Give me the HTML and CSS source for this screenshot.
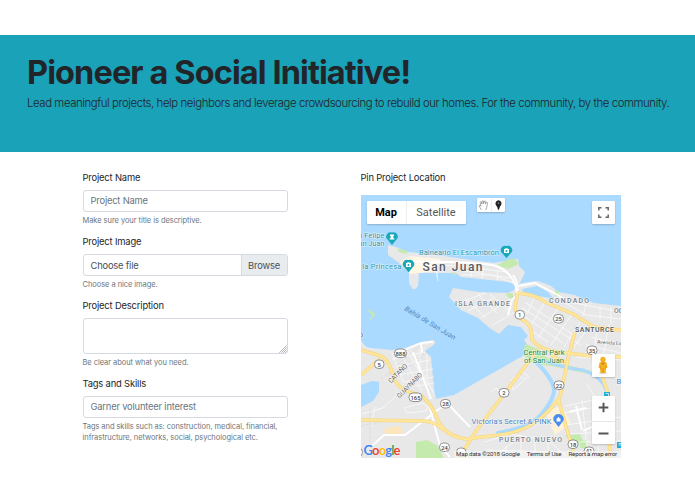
FILE: index.html
```html
<!DOCTYPE html>
<html lang="en">
<head>
    <meta charset="UTF-8">
    <meta name="viewport" content="width=device-width, initial-scale=1.0">
    <title>Pioneer a Social Initiative!</title>
    <link rel="stylesheet" href="styles.css">
</head>
<body>
    <header class="jumbotron">
        <h1>Pioneer a Social Initiative!</h1>
        <p class="lead">Lead meaningful projects, help neighbors and leverage crowdsourcing to rebuild our homes. For the community, by the community.</p>
    </header>

    <main class="container">
        <form class="project-form">
            <div class="form-group">
                <label for="projectName">Project Name</label>
                <input type="text" class="form-control" id="projectName" placeholder="Project Name">
                <small class="form-text">Make sure your title is descriptive.</small>
            </div>

            <div class="form-group">
                <label>Project Image</label>
                <div class="custom-file">
                    <span class="file-name">Choose file</span>
                    <span class="file-btn">Browse</span>
                </div>
                <small class="form-text">Choose a nice image.</small>
            </div>

            <div class="form-group">
                <label for="projectDescription">Project Description</label>
                <div class="textarea-wrap">
                    <textarea class="form-control" id="projectDescription"></textarea>
                    <svg class="grip" viewBox="0 0 9 9">
                        <path d="M0.5 8.5L8.5 0.5M2.8 8.5L8.5 2.8M5 8.5L8.5 5M7 8.5L8.5 7" stroke="#777" stroke-width="0.8" stroke-dasharray="1.1 0.3"/>
                    </svg>
                </div>
                <small class="form-text">Be clear about what you need.</small>
            </div>

            <div class="form-group">
                <label for="tags">Tags and Skills</label>
                <input type="text" class="form-control" id="tags" placeholder="Garner volunteer interest">
                <small class="form-text">Tags and skills such as: construction, medical, financial,<br>infrastructure, networks, social, psychological etc.</small>
            </div>
        </form>

        <section class="location">
            <label>Pin Project Location</label>
            <div class="map">
                <svg class="map-canvas" viewBox="0 0 260 263" width="260" height="263">
                    <rect width="260" height="263" fill="#aadaff"/>

                    <!-- land -->
                    <g fill="#e8e8e8">
                        <path d="M27 50L35 52L47 57L83 61L110 65L133 68L157 64L158 71L164 77L161 84L157 91L147 87L120 84L100 82L95 78L77 78V84L76 78L58 78L57 91Q54 96 51 93L48 88V78L37 67L27 60Z"/>
                        <path d="M0 145Q4 153 10 153L31 155L44 153L57 148L72 145Q77 147 71 151L64 156L70 162L74 204L93 200L160 162L170 155L163 145L167 141L160 132L147 130L138 139L130 134L117 123L100 115L88 102L92 93L117 97L147 98L153 95L157 89L167 87L177 86L190 91L197 97L213 100L233 108L260 111V263H0Z"/>
                    </g>
                    <path d="M0 190L11 186L18 187V197L12 206L0 212Z" fill="#aadaff"/>
                    <path d="M161 94L176 91L187 97L193 104L178 101L162 97Z" fill="#aadaff"/>

                    <!-- blocks, parks -->
                    <path d="M49 61L80 64L76 76L49 79L39 67Z" fill="#fff7e4"/>
                    <path d="M184 216L201 211L210 228L194 240Z" fill="#fff2d9"/>
                    <path d="M24 233L40 231L42 238L29 241L23 237Z" fill="#fbe6bd"/>
                    <g fill="#c5eaae">
                        <path d="M136 70L148 64H154L158 69L147 74Z"/>
                        <path d="M36 53L46 56V59L38 57Z"/>
                        <path d="M91 77L95 78L93 81Z"/>
                        <path d="M6 114Q13 116 14 120L8 126L11 120Z"/>
                        <path d="M144 99L151 98L154 103L148 103Z"/>
                        <path d="M194 96H198V101H194Z"/>
                        <path d="M164 149L175 153L190 166L230 176L228 179L190 171L174 169L162 160Z"/>
                        <path d="M55 247L66 245L77 251L83 263H55Z"/>
                        <path d="M204 240L219 239L223 248L211 248Z"/>
                        <path d="M219 247L226 245V253H219Z"/>
                    </g>

                    <!-- canals -->
                    <g fill="none" stroke="#aadaff" stroke-linecap="round">
                        <path d="M176 168Q193 185 193 196Q192 207 177 223Q166 233 137 238" stroke-width="4"/>
                        <path d="M183 166Q207 174 222 175Q241 182 245 195" stroke-width="3"/>
                    </g>

                    <!-- minor streets -->
                    <g fill="none" stroke="#fff" stroke-width="0.9" opacity="0.75">
                        <path d="M44 69L98 71L145 77M99 75L149 83M101 80L130 80L153 88M110 68V82M123 72L121 84M137 75L136 85M75 76L77 86M68 62L66 76"/>
                        <path d="M104 103L125 123M116 98L136 118M129 99L149 117M98 108L124 98M107 116L134 102M120 123L149 104M132 130L154 117"/>
                        <path d="M164 107L214 141M161 113L220 150M161 120L202 148M172 137L187 147M174 101L166 119M185 105L171 129M197 113L177 143M211 119L190 150M219 127L203 152M227 133L213 152"/>
                        <path d="M198 104L225 120L260 124M208 107L260 117M225 109L222 121M239 112V124M250 113V129M230 142L260 150M225 150L260 158M216 162L260 165M237 130L230 174M248 129L239 179"/>
                        <path d="M31 158L42 187M38 156L61 196M45 154L66 190M50 155L75 203M31 164L64 157M33 172L69 165M37 180L72 174M42 187L73 182M55 191L73 188M59 155V175M66 160V183"/>
                        <path d="M43 213L61 208L67 211L65 216L46 218ZM130 197L135 193L142 200M150 185L160 177L168 181L152 195ZM157 181L164 184"/>
                        <path d="M204 211L242 203M201 218L242 211M205 230L260 222M209 239L260 236M221 205L227 263M234 202L238 263M218 247L260 246M226 190L234 202"/>
                        <path d="M124 247L150 239L188 246L207 263M132 262L153 247M145 251V263M160 244V263M174 245V263M187 246V260M124 255L200 257M1 219L22 213L39 197M14 212L10 231"/>
                    </g>
                    <path d="M20 184L76 136M0 231L19 227M9 214V247M27 180L57 167L72 145" fill="none" stroke="#d3d3d3" stroke-width="0.6" stroke-dasharray="3 1.5"/>

                    <!-- avenues -->
                    <g fill="none" stroke="#fff" stroke-width="1.9" stroke-linejoin="round">
                        <path d="M46 67Q99 66 132 70Q153 76 156 98"/>
                        <path d="M152 80Q157 86 157 99M158 91L174 88L195 99L210 108"/>
                        <path d="M157 98L151 105L147 120"/>
                        <path d="M12 250L23 240L44 240L82 211L86 208L109 232M68 210L79 251L89 262"/>
                        <path d="M39 157L60 148L72 147M60 149L61 157M52 157L70 204"/>
                        <path d="M215 211L221 235M208 217L225 213M222 236L237 229"/>
                    </g>

                    <!-- highways: dark casing, then the same lines lighter -->
                    <g class="highways">
                        <path d="M156 98Q156 105 154 113Q156 122 165 127Q171 132 171 144Q174 151 190 156L231 161L260 162"/>
                        <path d="M156 98Q174 99 184 107L212 119L233 132L260 135"/>
                        <path d="M0 155L20 161Q28 165 33 183Q37 195 55 199Q67 202 76 223Q83 241 105 244L137 240Q164 237 180 223Q194 210 199 202L207 164L214 137"/>
                        <path d="M0 225L64 226Q74 227 83 235"/>
                        <path d="M0 180L19 164M98 263L115 236L165 170L178 154M197 203L214 263M205 168L190 160"/>
                        <path d="M234 162L246 195L249 263"/>
                    </g>
                    <g class="highways-top">
                        <path d="M156 98Q156 105 154 113Q156 122 165 127Q171 132 171 144Q174 151 190 156L231 161L260 162"/>
                        <path d="M156 98Q174 99 184 107L212 119L233 132L260 135"/>
                        <path d="M0 155L20 161Q28 165 33 183Q37 195 55 199Q67 202 76 223Q83 241 105 244L137 240Q164 237 180 223Q194 210 199 202L207 164L214 137"/>
                        <path d="M0 225L64 226Q74 227 83 235"/>
                        <path d="M0 180L19 164M98 263L115 236L165 170L178 154M197 203L214 263M205 168L190 160"/>
                        <path d="M234 162L246 195L249 263"/>
                    </g>

                    <!-- road shields -->
                    <g class="shield">
                        <rect x="154" y="115.5" width="9.5" height="8.5" rx="4"/><text x="158.7" y="122">1</text>
                        <rect x="192.5" y="119.5" width="10" height="8.5" rx="4"/><text x="197.5" y="126">25</text>
                        <rect x="226" y="151" width="10" height="8.5" rx="4"/><text x="231" y="157.5">35</text>
                        <rect x="33.5" y="154" width="12" height="8.5" rx="4"/><text x="39.5" y="160.5">888</text>
                        <rect x="13.5" y="165" width="9.5" height="8.5" rx="4"/><text x="18.2" y="171.5">5</text>
                        <rect x="48" y="198" width="13" height="8.5" rx="4"/><text x="54.5" y="204.5">165</text>
                        <rect x="79.5" y="204.5" width="10" height="8.5" rx="4"/><text x="84.5" y="211">28</text>
                        <rect x="138" y="193.5" width="10" height="8.5" rx="4"/><text x="143" y="200">2</text>
                        <rect x="193" y="186" width="10" height="8.5" rx="4"/><text x="198" y="192.5">22</text>
                        <rect x="78.5" y="248" width="10" height="8.5" rx="4"/><text x="83.5" y="254.5">24</text>
                        <rect x="207" y="245" width="10" height="8.5" rx="4"/><text x="212" y="251.5">18</text>
                        <rect x="95.5" y="253" width="9.5" height="8.5" rx="4"/>
                        <rect x="223" y="252" width="10" height="8.5" rx="4"/><text x="228" y="258">41</text>
                        <rect x="-8" y="253" width="9.5" height="8.5" rx="4"/>
                    </g>

                    <!-- place labels -->
                    <g class="poi">
                        <text x="-3" y="43" textLength="26.5">n Felipe</text>
                        <text x="-2.5" y="50.5" textLength="26">an Juan</text>
                        <text x="-5" y="74" textLength="45.5">e la Princesa</text>
                        <text x="58" y="60" textLength="80">Balneario El Escambrón</text>
                    </g>
                    <text class="city" x="61.5" y="76" textLength="60">San Juan</text>
                    <g class="area">
                        <text x="94" y="110.5" textLength="55">ISLA GRANDE</text>
                        <text x="188" y="107.5" textLength="40">CONDADO</text>
                        <text x="253" y="118">OC</text>
                        <text x="138" y="247" textLength="63">PUERTO NUEVO</text>
                        <text class="dark" x="214" y="136.5" textLength="39">SANTURCE</text>
                        <text class="town" transform="translate(30 188.5) rotate(-45)" textLength="24">CATAÑO</text>
                        <text class="town" transform="translate(38.5 203.5) rotate(-45)" textLength="33">GUAYNABO</text>
                        <text class="street" x="236" y="148.5" transform="rotate(4 236 148)">Avenida Es</text>
                    </g>
                    <text class="bay" transform="translate(43 115) rotate(31)" textLength="58">Bahía de San Juan</text>
                    <g class="park">
                        <text x="162.5" y="159.5" textLength="41">Central Park</text>
                        <text x="163" y="167.5" textLength="40">of San Juan</text>
                    </g>
                    <text class="shop" x="110.5" y="229" textLength="80">Victoria's Secret &amp; PINK</text>
                    <text class="shop" x="255.5" y="189">B</text>
                    <text class="sign" x="-2" y="142">o</text>

                    <!-- markers -->
                    <g fill="#1aa8b8">
                        <path d="M31 37.5A4.3 4.3 0 0 1 35 45L31 50L27 45A4.3 4.3 0 0 1 31 37.5Z"/>
                        <path d="M47.5 65A4.3 4.3 0 0 1 51.5 72.5L47.5 77.5L43.5 72.5A4.3 4.3 0 0 1 47.5 65Z"/>
                        <path d="M145.5 51A4.3 4.3 0 0 1 149.5 58.5L145.5 63L141.5 58.5A4.3 4.3 0 0 1 145.5 51Z"/>
                    </g>
                    <path d="M29 39.5H33V41H32.3V43.2H33.3V44.5H28.7V43.2H29.7V41H29ZM45 68H46L46.6 67.2H48.4L49 68H50V72H45ZM143 54H144L144.6 53.2H146.4L147 54H148V58H143Z" fill="#fff"/>
                    <circle cx="47.5" cy="70" r="1" fill="#1aa8b8"/>
                    <circle cx="145.5" cy="56" r="1" fill="#1aa8b8"/>
                    <path d="M197.5 219A4.7 4.7 0 0 1 201.3 227L197.5 232L193.7 227A4.7 4.7 0 0 1 197.5 219Z" fill="#4a8df0"/>
                    <path d="M195.5 223.5H199.5V226.5H195.5ZM196.3 223.5Q197.5 220.5 198.7 223.5" fill="#fff"/>
                    <path d="M243 197H249V202H243ZM256 247H260V253H256Z" fill="#20aeda"/>
                    <path d="M244.5 198.5H247.5V201M257.5 248.5H260M257.5 250H260" fill="none" stroke="#fff" stroke-width="0.7"/>
                </svg>

                <div class="map-type">
                    <span class="active">Map</span>
                    <span>Satellite</span>
                </div>

                <div class="draw-tools">
                    <svg viewBox="0 0 14 14">
                        <path d="M4.5 12L2.3 8.5Q1.8 7.2 3 7.3L4 8.2L3.2 4.3Q3.3 3.2 4.3 3.9L5 6L5.2 3Q5.7 2 6.4 3L6.6 5.8L7.5 3Q8.3 2.3 8.7 3.4L8.4 6L9.7 4.3Q10.8 4.2 10.5 5.3L9.5 10L8.8 12" fill="#fff" stroke="#888" stroke-width="0.7"/>
                    </svg>
                    <svg viewBox="0 0 14 14">
                        <path d="M7 2A3.4 3.4 0 0 1 10 6.7Q8 9 7.5 12H6.5Q6 9 4 6.7A3.4 3.4 0 0 1 7 2Z" fill="#222"/>
                        <circle cx="7" cy="5" r="1" fill="#777"/>
                    </svg>
                </div>

                <div class="fullscreen">
                    <svg viewBox="0 0 11 11">
                        <path d="M0.8 3.5V0.8H3.5M7.5 0.8H10.2V3.5M10.2 7.5V10.2H7.5M3.5 10.2H0.8V7.5" fill="none" stroke="#666" stroke-width="1.5"/>
                    </svg>
                </div>

                <div class="pegman">
                    <svg viewBox="0 0 12 19">
                        <ellipse cx="6" cy="17" rx="4" ry="1.3" fill="#ddd"/>
                        <path d="M2.5 6.5Q6 5 9.5 6.5L10.5 11.5L9.2 12L8.5 17H3.5L2.8 12L1.5 11.5Z" fill="#f6b221"/>
                        <path d="M4 7L6 9L8 7ZM5.7 12H6.3V17H5.7ZM2.8 12L3.3 9L3.6 13ZM9.2 12L8.7 9L8.4 13Z" fill="#c77e16"/>
                        <circle cx="6" cy="3.5" r="2.7" fill="#f6b221"/>
                        <path d="M3.6 4.5Q6 7 8.4 4.5Q7.5 6.2 6 6.2T3.6 4.5Z" fill="#c77e16"/>
                    </svg>
                </div>

                <div class="zoom">
                    <svg viewBox="0 0 23 26"><path d="M6.5 12H16.5M11.5 7V17" stroke="#555" stroke-width="2"/></svg>
                    <svg viewBox="0 0 23 22"><path d="M6.5 11.5H16.5" stroke="#555" stroke-width="2"/></svg>
                </div>

                <div class="google">
                    <span class="b">G</span><span class="r">o</span><span class="y">o</span><span class="b">g</span><span class="g">l</span><span class="r">e</span>
                </div>
                <div class="map-footer">
                    <span>Map data ©2018 Google</span>
                    <span>Terms of Use</span>
                    <span>Report a map error</span>
                </div>
            </div>
        </section>
    </main>
</body>
</html>
```

FILE: styles.css
```css
* {
    margin: 0;
    padding: 0;
    box-sizing: border-box;
}

body {
    font-family: Inter, "Liberation Sans", sans-serif;
    background: #fff;
    color: #212529;
    padding-top: 35px;
    overflow: hidden;
}

.jumbotron {
    height: 117px;
    background: #1aa2b8;
    padding: 18px 27px 0;
    white-space: nowrap;
}

.jumbotron h1 {
    font-size: 32.5px;
    line-height: 40px;
    font-weight: 700;
    letter-spacing: -0.9px;
}

.lead {
    margin-top: 1px;
    font-size: 11.4px;
    line-height: 18px;
    font-weight: 300;
    letter-spacing: -0.42px;
}

.container {
    display: flex;
    gap: 73px;
    padding: 18.5px 74px 0 82.5px;
}

.project-form {
    width: 205px;
}

.form-group {
    margin-bottom: 8.5px;
}

label {
    display: block;
    height: 14.5px;
    margin-bottom: 4.5px;
    font-size: 9.4px;
    line-height: 14.5px;
    letter-spacing: -0.17px;
    white-space: nowrap;
}

.form-control,
.custom-file {
    display: block;
    width: 100%;
    height: 22.5px;
    border: 1px solid #d5dae0;
    border-radius: 3px;
    background: #fff;
    font-family: inherit;
    font-size: 9.4px;
    letter-spacing: -0.2px;
    color: #495057;
}

.form-control {
    padding: 0 7px;
}

.form-control::placeholder {
    color: #6c757d;
    opacity: 1;
}

.custom-file {
    display: flex;
    line-height: 21px;
    overflow: hidden;
}

.file-name {
    flex: 1;
    padding-left: 7px;
}

.file-btn {
    width: 46px;
    text-align: center;
    background: #e9ecef;
    border-left: 1px solid #d5dae0;
}

.textarea-wrap {
    position: relative;
}

textarea.form-control {
    height: 36.5px;
    resize: none;
}

.grip {
    position: absolute;
    right: 1px;
    bottom: 1px;
    width: 8px;
    height: 8px;
}

.form-text {
    display: block;
    margin-top: 2.5px;
    font-size: 7.5px;
    line-height: 11.5px;
    letter-spacing: -0.06px;
    color: #6c757d;
    white-space: nowrap;
}

.location {
    width: 260px;
}

.location label {
    margin-bottom: 10px;
}

.map {
    position: relative;
    width: 260px;
    height: 263px;
    overflow: hidden;
    font-family: Roboto, sans-serif;
}

.map-canvas {
    display: block;
}

.map-canvas text {
    stroke: #fff;
    stroke-width: 1.2px;
    stroke-opacity: 0.65;
    stroke-linejoin: round;
    paint-order: stroke;
}

.highways,
.highways-top {
    fill: none;
    stroke: #f3d57c;
    stroke-width: 3.5px;
    stroke-linejoin: round;
}

.highways-top {
    stroke: #ffe69b;
    stroke-width: 2.3px;
}

.map-canvas .shield rect {
    fill: #fff;
    stroke: #777;
    stroke-width: 0.8px;
}

.map-canvas .shield text {
    font-size: 5.8px;
    font-weight: 500;
    fill: #444;
    text-anchor: middle;
    stroke: none;
}

.poi text {
    font-size: 7.6px;
    fill: #2a94a8;
}

.city {
    font-size: 12px;
    font-weight: 500;
    fill: #555b60;
}

.area text {
    font-size: 6.9px;
    font-weight: 500;
    fill: #75808a;
}

.area .dark {
    font-size: 7px;
    fill: #50585f;
}

.area .town {
    font-size: 6.6px;
    font-weight: 400;
    fill: #666;
}

.area .street {
    font-size: 5px;
    font-weight: 400;
    fill: #666;
}

.map-canvas .bay {
    font-size: 7.2px;
    font-style: italic;
    fill: #5488bf;
    stroke: none;
}

.park text {
    font-size: 7.6px;
    fill: #26863a;
}

.shop {
    font-size: 7.6px;
    fill: #4c7fc4;
}

.sign {
    font-size: 7px;
    fill: #555;
}

.map-type,
.draw-tools,
.fullscreen,
.pegman,
.zoom {
    position: absolute;
    display: flex;
    align-items: center;
    justify-content: center;
    background: #fff;
    border-radius: 1px;
    box-shadow: 0 1px 2px rgba(0,0,0,0.2);
}

.map-type {
    left: 6px;
    top: 6px;
    width: 99px;
    height: 23px;
    font-size: 11px;
    color: #565656;
}

.map-type span {
    flex: 1;
    line-height: 23px;
    text-align: center;
}

.map-type .active {
    flex: 0 0 40px;
    border-right: 1px solid #eee;
    font-weight: 700;
    color: #000;
}

.draw-tools {
    left: 116px;
    top: 3px;
    width: 28px;
    height: 14px;
}

.draw-tools svg {
    width: 14px;
    height: 14px;
}

.draw-tools svg + svg {
    border-left: 1px solid #eee;
}

.fullscreen {
    right: 6px;
    top: 6px;
    width: 23px;
    height: 23px;
}

.fullscreen svg {
    width: 11px;
    height: 11px;
}

.pegman {
    right: 6px;
    top: 159px;
    width: 23px;
    height: 23px;
}

.pegman svg {
    width: 12px;
    height: 19px;
}

.zoom {
    right: 6px;
    top: 201px;
    width: 23px;
    height: 48px;
    flex-direction: column;
}

.zoom svg {
    width: 23px;
    height: 22px;
}

.zoom svg:first-child {
    height: 26px;
    border-bottom: 1px solid #e6e6e6;
}

.google {
    position: absolute;
    left: 3px;
    bottom: 0;
    display: flex;
    font-family: Lato, sans-serif;
    font-size: 13px;
    line-height: 16px;
    letter-spacing: -0.9px;
    font-weight: 700;
    text-shadow: 0 0 1px #fff;
}

.google .b { color: #4285f4; }
.google .r { color: #ea4335; }
.google .y { color: #fbbc05; }
.google .g { color: #34a853; }

.map-footer {
    position: absolute;
    right: 0;
    bottom: 0;
    display: flex;
    gap: 7px;
    padding: 0 3.5px 0 2px;
    background: rgba(245,245,245,0.7);
    font-size: 6.2px;
    letter-spacing: -0.17px;
    line-height: 7.5px;
    color: #333;
    white-space: nowrap;
}
```
